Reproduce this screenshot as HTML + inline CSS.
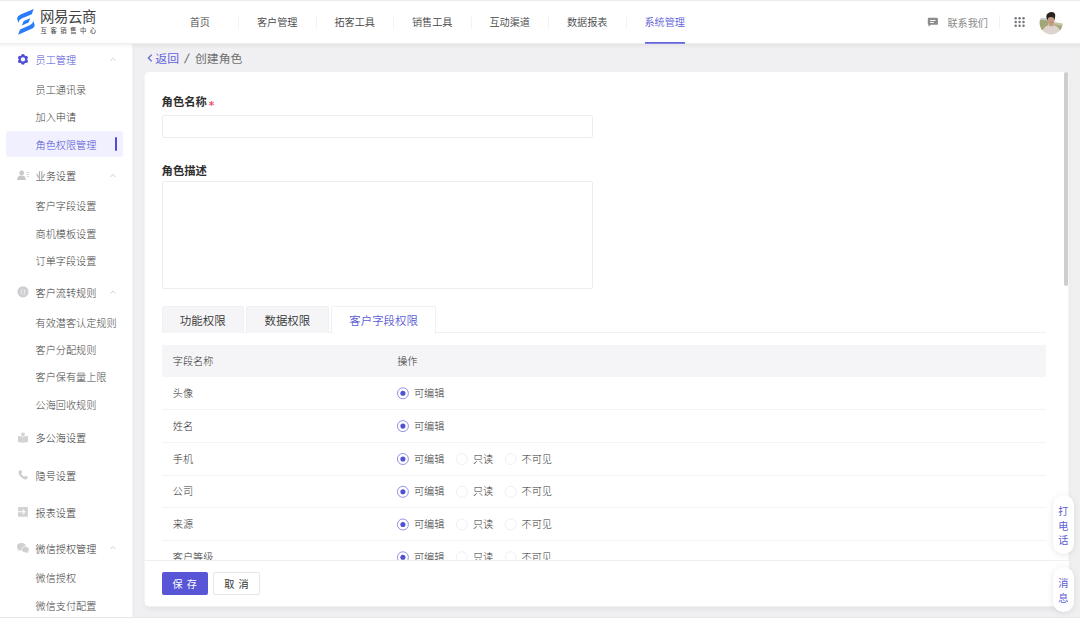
<!DOCTYPE html>
<html lang="zh-CN">
<head>
<meta charset="utf-8">
<title>创建角色</title>
<style>
*{box-sizing:border-box;margin:0;padding:0}
html,body{width:1080px;height:618px;overflow:hidden}
body{position:relative;background:#f0f0f2;font-family:"Liberation Sans","Noto Sans CJK SC",sans-serif;color:#333;font-size:10px;font-weight:300}
.abs{position:absolute}
.t{position:absolute;white-space:nowrap;line-height:16px;height:16px}
#header{position:absolute;left:0;top:0;width:1080px;height:44px;z-index:5}
#topline{position:absolute;left:0;top:0;width:1080px;height:1px;background:#ebebee;z-index:9}
#botline{position:absolute;left:0;top:617px;width:1080px;height:1px;background:#e6e7e7;z-index:9}
.nav{position:absolute;top:15px;width:77.5px;text-align:center;font-size:10.15px;font-weight:350;line-height:16px;color:#444}
.nav.on{color:#5b5bd6}
.sep{position:absolute;top:15px;width:1px;height:14px;background:#f3f3f3}
#side{position:absolute;left:0;top:44px;width:132px;height:574px;z-index:3}
.m{position:absolute;left:35.6px;font-size:10.15px;line-height:16px;height:16px;color:#333;white-space:nowrap}
.s{position:absolute;left:35.6px;font-size:10.15px;line-height:16px;height:16px;color:#444;white-space:nowrap}
.pur{color:#5151d3}
.chev{position:absolute;left:109.5px;width:6px;height:4px}
#panel{position:absolute;left:144px;top:72px;width:924.6px;height:534.4px;border-radius:4.5px;overflow:hidden;z-index:1}
.lbl{position:absolute;left:17.6px;font-size:11.3px;font-weight:700;color:#2e2e2e;line-height:16px;white-space:nowrap}
.inp{position:absolute;left:17.6px;width:431.5px;border:1px solid #ededef;border-radius:2px;background:#fff}
.tab{position:absolute;top:233.8px;height:27px;font-size:11.45px;font-weight:350;line-height:29px;text-align:center;color:#333;background:#f5f5f7;border:1px solid #f0f0f2;border-bottom:none;border-radius:2px 2px 0 0}
.tab.on{background:#fff;color:#5b5bd6;border-color:#f0f0f2;height:28px}
.row{position:absolute;left:17.6px;width:884.6px;border-bottom:1px solid #f4f4f6}
.row .n{position:absolute;left:11.2px;line-height:16px;font-size:10.15px;color:#333}
.rd{position:absolute;top:10.6px;width:11.6px;height:11.6px;border-radius:50%;border:1px solid #e4e4e8;background:#fff}
.rd.on{border-color:#5b5bd6}
.rd.on::after{content:"";position:absolute;left:2.3px;top:2.3px;width:5px;height:5px;border-radius:50%;background:#5151d3}
.rl{position:absolute;line-height:16px;font-size:10.15px;color:#333;white-space:nowrap}
#foot{position:absolute;left:0.6px;top:488px;width:924px;height:46.4px;background:#fff;border-top:1px solid #efeff1}
.btn{position:absolute;top:11px;height:23px;width:46px;border-radius:2px;font-size:10.15px;font-weight:400;line-height:26.5px;text-align:center;word-spacing:1.2px;overflow:hidden}
.pill{position:absolute;left:1053px;width:20.5px;background:#fff;border-radius:10.25px;box-shadow:0 1px 6px rgba(0,0,0,.10);z-index:8;color:#5b5bd6;font-size:10.15px;font-weight:400;text-align:center}
.pill span{display:block;height:14.5px;line-height:14.5px}
</style>
</head>
<body>
<svg id="bg" class="abs" style="left:0;top:0;z-index:0" width="1080" height="618" viewBox="0 0 1080 618">
  <defs><filter id="sh" x="-5%" y="-5%" width="110%" height="115%"><feGaussianBlur stdDeviation="3"/></filter>
  <filter id="sh3" x="-5%" y="-100%" width="110%" height="300%"><feGaussianBlur stdDeviation="2"/></filter>
  <filter id="sh2" x="-50%" y="-5%" width="200%" height="110%"><feGaussianBlur stdDeviation="1.2"/></filter></defs>
  <rect x="146" y="76" width="921" height="533" rx="4.5" fill="#000" opacity="0.06" filter="url(#sh)"/>
  <rect x="144.6" y="72.1" width="923.9" height="534.3" rx="4.5" fill="#fff"/>
  <rect x="120" y="44" width="13.5" height="574" fill="#000" opacity="0.035" filter="url(#sh2)"/>
  <rect x="0" y="44" width="132.55" height="574" fill="#fff"/>
  <rect x="-10" y="38" width="1100" height="7.5" fill="#000" opacity="0.06" filter="url(#sh3)"/>
  <rect x="0" y="0" width="1080" height="43.4" fill="#fff"/>
</svg>
<div id="topline"></div>
<div id="botline"></div>

<div id="header">
  <div class="t" style="left:40.1px;top:7.5px;font-size:14.4px;line-height:18px;height:18px;color:#444;font-weight:400;letter-spacing:-0.4px">网易云商</div>
  <div class="t" style="left:40.6px;top:26px;font-size:6.3px;line-height:10px;height:10px;color:#555;font-weight:500;letter-spacing:3.55px">互客销售中心</div>

  <div class="nav" style="left:161px">首页</div><div class="sep" style="left:238px"></div>
  <div class="nav" style="left:238.5px">客户管理</div><div class="sep" style="left:315.5px"></div>
  <div class="nav" style="left:316px">拓客工具</div><div class="sep" style="left:393px"></div>
  <div class="nav" style="left:393.5px">销售工具</div><div class="sep" style="left:470.5px"></div>
  <div class="nav" style="left:471px">互动渠道</div><div class="sep" style="left:548px"></div>
  <div class="nav" style="left:548.5px">数据报表</div><div class="sep" style="left:625.5px"></div>
  <div class="nav on" style="left:626px">系统管理</div>
  <div class="abs" style="left:645px;top:42px;width:40.2px;height:2px;background:linear-gradient(#6363db 0,#6363db 50%,#8484e2 50%,#8484e2 100%)"></div>

  <div class="t" style="left:947.5px;top:16px;font-size:10.15px;color:#8a8a8a;font-weight:400">联系我们</div>
  <div class="sep" style="left:999px;top:15px;height:13.5px;background:#f2f2f2"></div>
  <svg class="abs" style="left:0;top:0" width="1080" height="44" viewBox="0 0 1080 44">
<g transform="translate(14.000,6.000) scale(1.0000,1.0000) translate(-14.000,-6.000)"><g fill="#2b7bfb">
      <path d="M33.7 9 L20.6 14.6 Q17 16.2 17.2 19 L18.5 23 Q18.6 20 21.6 18.6 L31.8 14.2 Z"/>
      <path d="M30.2 18.3 L23.7 21.1 L21.8 25.4 L28.6 22.4 Z"/>
      <path d="M18.1 34.7 L31.2 29.1 Q34.8 27.5 34.6 24.7 L33.3 20.7 Q33.2 23.7 30.2 25.1 L20 29.5 Z"/>
    </g></g>
<g transform="translate(927.400,17.600) scale(1.0000,1.0000) translate(-0.000,-0.000)"><path d="M1.3 0.2 H9.6 Q10.5 0.2 10.5 1.1 V6.3 Q10.5 7.2 9.6 7.2 H3.4 L1.2 9.2 V7.2 Q0.4 7.2 0.4 6.3 V1.1 Q0.4 0.2 1.3 0.2 Z" fill="#8c8c8e"/>
    <rect x="2.7" y="2.4" width="5.4" height="0.95" fill="#fff"/>
    <rect x="2.7" y="4.4" width="3.7" height="0.95" fill="#fff"/></g>
<g transform="translate(1014.000,16.000) scale(1.0000,1.0000) translate(-0.000,-0.000)" fill="#74747a"><circle cx="1.7" cy="2.2" r="1.22"/><circle cx="5.6" cy="2.2" r="1.22"/><circle cx="9.5" cy="2.2" r="1.22"/>
    <circle cx="1.7" cy="5.95" r="1.22"/><circle cx="5.6" cy="5.95" r="1.22"/><circle cx="9.5" cy="5.95" r="1.22"/>
    <circle cx="1.7" cy="9.7" r="1.22"/><circle cx="5.6" cy="9.7" r="1.22"/><circle cx="9.5" cy="9.7" r="1.22"/></g>
<g transform="translate(1039.600,11.300) scale(1.0000,1.0000) translate(-0.000,-0.000)"><defs><clipPath id="av"><circle cx="11.6" cy="11.6" r="11.6"/></clipPath>
    <filter id="bl" x="-20%" y="-20%" width="140%" height="140%"><feGaussianBlur stdDeviation="0.55"/></filter></defs>
    <g clip-path="url(#av)"><g filter="url(#bl)">
      <rect x="-3" y="-3" width="30" height="30" fill="#fdfdfc"/>
      <path d="M-2 6.6 Q4 6 8 7.4 L8 10 L-2 10 Z" fill="#c9d0d2"/>
      <path d="M-2 8.6 Q4 8.2 9 9.4 L9 19 L-2 19 Z" fill="#a3a774"/>
      <path d="M14 10.6 Q19 11 25 12.6 L25 19 L14 19 Z" fill="#c6c8aa"/>
      <path d="M14 12.6 Q19 13.4 25 15 L25 19 L14 19 Z" fill="#a9ad7e"/>
      <path d="M2.2 24 Q2.6 15.6 8.6 14 L11.5 13.2 L14.6 14 Q20.4 15.6 21 24 Z" fill="#ddd4cf"/>
      <rect x="9.4" y="11.5" width="4.6" height="3.4" fill="#c39c86"/>
      <ellipse cx="11.5" cy="9.2" rx="3.4" ry="4.2" fill="#c59b84"/>
      <path d="M7.9 9.2 Q5.6 4.6 7.8 2.4 Q10.4 -0.2 13.6 1 Q16.4 2.4 15.4 6.2 L15 8.6 Q14.2 5.8 12.2 5.6 Q9.6 5.4 8.6 6.8 Z" fill="#29221f"/>
      <ellipse cx="11.6" cy="11" rx="0.9" ry="0.5" fill="#b07866"/>
    </g></g></g>
</svg>
</div>

<div id="side">
  <!-- icons -->
  <div class="m pur" style="top:9px">员工管理</div>
  <div class="s" style="top:39px">员工通讯录</div>
  <div class="s" style="top:66px">加入申请</div>
  <div class="abs" style="left:5.7px;top:87px;width:117px;height:25.7px;border-radius:3px;background:#f0f0fe"></div>
  <div class="abs" style="left:115px;top:93px;width:2.2px;height:13.9px;background:#5050d6;border-radius:1px"></div>
  <div class="s pur" style="top:94px">角色权限管理</div>

  <div class="m" style="top:125px">业务设置</div>
  <div class="s" style="top:155px">客户字段设置</div>
  <div class="s" style="top:183px">商机模板设置</div>
  <div class="s" style="top:210px">订单字段设置</div>

  <div class="m" style="top:242px">客户流转规则</div>
  <div class="s" style="top:272px">有效潜客认定规则</div>
  <div class="s" style="top:299px">客户分配规则</div>
  <div class="s" style="top:326px">客户保有量上限</div>
  <div class="s" style="top:354px">公海回收规则</div>

  <div class="m" style="top:387px">多公海设置</div>

  <div class="m" style="top:425px">隐号设置</div>

  <div class="m" style="top:462px">报表设置</div>

  <div class="m" style="top:498px">微信授权管理</div>
  <div class="s" style="top:527px">微信授权</div>
  <div class="s" style="top:555px">微信支付配置</div>
<svg class="abs" style="left:0;top:0" width="132" height="574" viewBox="0 0 132 574">
<g transform="translate(17.450,9.600) scale(1.0000,1.0000) translate(5.500,5.800)"><g fill="#5050d6">
      <circle cx="0" cy="-3.45" r="1.95"/><circle cx="2.99" cy="-1.725" r="1.95"/><circle cx="2.99" cy="1.725" r="1.95"/>
      <circle cx="0" cy="3.45" r="1.95"/><circle cx="-2.99" cy="1.725" r="1.95"/><circle cx="-2.99" cy="-1.725" r="1.95"/>
      <circle cx="0" cy="0" r="3.8"/>
    </g>
    <circle cx="0" cy="0" r="2.15" fill="#fff"/></g>
<g transform="translate(109.9,13.2) scale(1.0000,1.0000) translate(-0.000,-0.000)"><path d="M0.5 3.5 L3 1 L5.5 3.5" fill="none" stroke="#c4c4c8" stroke-width="0.8"/></g>
<g transform="translate(17.000,126.000) scale(1.0000,1.0000) translate(-0.000,-0.000)"><g fill="#c8c8c8"><circle cx="4.65" cy="2.9" r="2.4"/><path d="M0.1 10.05 Q0.1 5.6 4.5 5.6 Q8.8 5.6 8.8 10.05 Z"/>
    <rect x="9.3" y="2.2" width="2.9" height="0.7"/><rect x="9.3" y="4.15" width="2.9" height="0.7"/><rect x="9.9" y="6.1" width="2.3" height="0.7"/></g></g>
<g transform="translate(109.9,129.5) scale(1.0000,1.0000) translate(-0.000,-0.000)"><path d="M0.5 3.5 L3 1 L5.5 3.5" fill="none" stroke="#c4c4c8" stroke-width="0.8"/></g>
<g transform="translate(17.300,242.100) scale(0.9500,0.9500) translate(-0.000,-0.000)"><circle cx="6" cy="6" r="5.9" fill="#cfcfd1"/>
    <path d="M3.4 8 H4.6 V4.6 Q4.6 3.5 5.7 3.5 M8.8 4.2 H7.6 V7.6 Q7.6 8.7 6.5 8.7" fill="none" stroke="#ececee" stroke-width="1"/></g>
<g transform="translate(109.9,246.0) scale(1.0000,1.0000) translate(-0.000,-0.000)"><path d="M0.5 3.5 L3 1 L5.5 3.5" fill="none" stroke="#c4c4c8" stroke-width="0.8"/></g>
<g transform="translate(17.500,388.500) scale(1.0000,1.0000) translate(-0.000,-0.000)"><g fill="#d2d2d4"><circle cx="5.5" cy="1.8" r="1.9"/><path d="M0.5 3.3 L5.5 4.2 L10.5 3.3 V9.5 L5.5 10.3 L0.5 9.5 Z"/></g>
    <path d="M5.5 4.2 V10.3" stroke="#e2e2e4" stroke-width="0.5"/></g>
<g transform="translate(17.6,425.8) scale(0.9636,0.9636) translate(-0.000,-0.000)"><path d="M2.2 0.6 L3.8 0.3 L4.8 2.9 L3.6 3.8 Q4.6 6 7 7.3 L8 6.1 L10.5 7.2 L10.2 8.9 Q9.6 10.4 7.8 10 Q2.2 8 0.9 2.8 Q0.7 1.1 2.2 0.6 Z" fill="#cdcdcd"/></g>
<g transform="translate(17.700,462.600) scale(0.9545,0.9545) translate(-0.000,-0.000)"><rect x="0.3" y="0.3" width="10.4" height="10.4" rx="0.8" fill="#d2d2d2"/>
    <path d="M0 5.5 H7.2 M5.2 3.2 L7.5 5.5 L5.2 7.8" fill="none" stroke="#fff" stroke-width="1.1"/></g>
<g transform="translate(16.800,498.900) scale(1.0000,1.0000) translate(-0.000,-0.000)"><g fill="#cfcfcf"><ellipse cx="4.6" cy="3.8" rx="4.4" ry="3.6"/><path d="M1.4 8.2 L2.2 5.8 L4 7 Z"/>
    <ellipse cx="8.6" cy="6.7" rx="3.8" ry="3.2" stroke="#fff" stroke-width="0.6"/><path d="M11.6 10.4 L10.9 8.6 L9.6 9.4 Z"/></g></g>
<g transform="translate(109.9,501.5) scale(1.0000,1.0000) translate(-0.000,-0.000)"><path d="M0.5 3.5 L3 1 L5.5 3.5" fill="none" stroke="#c4c4c8" stroke-width="0.8"/></g>
</svg>
</div>

<!-- breadcrumb -->
<svg class="abs" style="left:147px;top:54px" width="6" height="9" viewBox="0 0 6 9"><path d="M4.7 0.7 L1.4 4 L4.7 7.3" fill="none" stroke="#5b5bd6" stroke-width="1.2"/></svg>
<div class="t" style="left:155.3px;top:51px;font-size:11.85px;font-weight:400;color:#6060da">返回</div>
<div class="t" style="left:185px;top:51px;font-size:13px;font-weight:400;color:#666;transform:skewX(-13deg)">/</div>
<div class="t" style="left:195px;top:51px;font-size:11.85px;font-weight:400;color:#6e6e6e">创建角色</div>

<div id="panel">
  <div class="lbl" style="top:22px">角色名称</div>
  <div class="t" style="left:64.7px;top:26px;font-family:'DejaVu Sans',sans-serif;font-size:10.5px;font-weight:700;color:#f0506f;line-height:14px;height:14px">*</div>
  <div class="inp" style="top:43px;height:22.6px"></div>
  <div class="lbl" style="top:90.6px">角色描述</div>
  <div class="inp" style="top:109px;height:108px"></div>

  <div class="abs" style="left:17.6px;top:260.3px;width:884.6px;height:1px;background:#f1f1f3"></div>
  <div class="tab" style="left:17.6px;width:82.3px">功能权限</div>
  <div class="tab" style="left:102.1px;width:82.5px">数据权限</div>
  <div class="tab on" style="left:187.3px;width:104.6px">客户字段权限</div>

  <div class="abs" style="left:17.6px;top:272.7px;width:884.6px;height:32px;background:#f5f5f7"></div>
  <div class="t" style="left:28.8px;top:282px;font-size:10.15px;color:#333">字段名称</div>
  <div class="t" style="left:253.2px;top:282px;font-size:10.15px;color:#333">操作</div>

  <div class="row" style="top:305px;height:33px"><div class="n" style="top:9px">头像</div><div class="rl" style="left:252.4px;top:9px">可编辑</div></div>
  <div class="row" style="top:338px;height:33px"><div class="n" style="top:9px">姓名</div><div class="rl" style="left:252.4px;top:9px">可编辑</div></div>
  <div class="row" style="top:371px;height:33px"><div class="n" style="top:9px">手机</div><div class="rl" style="left:252.4px;top:9px">可编辑</div><div class="rl" style="left:311.3px;top:9px">只读</div><div class="rl" style="left:360px;top:9px">不可见</div></div>
  <div class="row" style="top:404px;height:32px"><div class="n" style="top:8px">公司</div><div class="rl" style="left:252.4px;top:8px">可编辑</div><div class="rl" style="left:311.3px;top:8px">只读</div><div class="rl" style="left:360px;top:8px">不可见</div></div>
  <div class="row" style="top:436px;height:33px"><div class="n" style="top:9px">来源</div><div class="rl" style="left:252.4px;top:9px">可编辑</div><div class="rl" style="left:311.3px;top:9px">只读</div><div class="rl" style="left:360px;top:9px">不可见</div></div>
  <div class="row" style="top:469px;height:33px"><div class="n" style="top:9px">客户等级</div><div class="rl" style="left:252.4px;top:9px">可编辑</div><div class="rl" style="left:311.3px;top:9px">只读</div><div class="rl" style="left:360px;top:9px">不可见</div></div>
  <svg class="abs" style="left:0;top:0" width="924" height="534" viewBox="0 0 924 534"><circle cx="258.9" cy="321.3" r="5.5" fill="#fff" stroke="#7070e0" stroke-width="0.75"/><circle cx="258.9" cy="321.3" r="2.55" fill="#5151d3"/><circle cx="258.9" cy="354.1" r="5.5" fill="#fff" stroke="#7070e0" stroke-width="0.75"/><circle cx="258.9" cy="354.1" r="2.55" fill="#5151d3"/><circle cx="258.9" cy="387.0" r="5.5" fill="#fff" stroke="#7070e0" stroke-width="0.75"/><circle cx="258.9" cy="387.0" r="2.55" fill="#5151d3"/><circle cx="317.8" cy="387.0" r="5.5" fill="#fff" stroke="#e9e9ee" stroke-width="0.75"/><circle cx="366.7" cy="387.0" r="5.5" fill="#fff" stroke="#e9e9ee" stroke-width="0.75"/><circle cx="258.9" cy="419.8" r="5.5" fill="#fff" stroke="#7070e0" stroke-width="0.75"/><circle cx="258.9" cy="419.8" r="2.55" fill="#5151d3"/><circle cx="317.8" cy="419.8" r="5.5" fill="#fff" stroke="#e9e9ee" stroke-width="0.75"/><circle cx="366.7" cy="419.8" r="5.5" fill="#fff" stroke="#e9e9ee" stroke-width="0.75"/><circle cx="258.9" cy="452.5" r="5.5" fill="#fff" stroke="#7070e0" stroke-width="0.75"/><circle cx="258.9" cy="452.5" r="2.55" fill="#5151d3"/><circle cx="317.8" cy="452.5" r="5.5" fill="#fff" stroke="#e9e9ee" stroke-width="0.75"/><circle cx="366.7" cy="452.5" r="5.5" fill="#fff" stroke="#e9e9ee" stroke-width="0.75"/><circle cx="258.9" cy="485.3" r="5.5" fill="#fff" stroke="#7070e0" stroke-width="0.75"/><circle cx="258.9" cy="485.3" r="2.55" fill="#5151d3"/><circle cx="317.8" cy="485.3" r="5.5" fill="#fff" stroke="#e9e9ee" stroke-width="0.75"/><circle cx="366.7" cy="485.3" r="5.5" fill="#fff" stroke="#e9e9ee" stroke-width="0.75"/></svg>

  <div id="foot">
    <div class="btn" style="left:17.1px;background:#5856d6;color:#fff">保 存</div>
    <div class="btn" style="left:68.6px;width:46.6px;background:#fff;color:#333;border:1px solid #e6e6e8;line-height:24.5px">取 消</div>
  </div>
</div>

<!-- scrollbar -->
<div class="abs" style="left:1063.8px;top:72px;width:4.3px;height:214px;border-radius:2.2px;background:#cecece;z-index:4"></div>

<div class="pill" style="top:494.5px;height:59px;padding-top:10.5px"><span>打</span><span>电</span><span>话</span></div>
<div class="pill" style="top:566.6px;height:45px;padding-top:10.9px"><span style="height:14.4px">消</span><span>息</span></div>
</body>
</html>
